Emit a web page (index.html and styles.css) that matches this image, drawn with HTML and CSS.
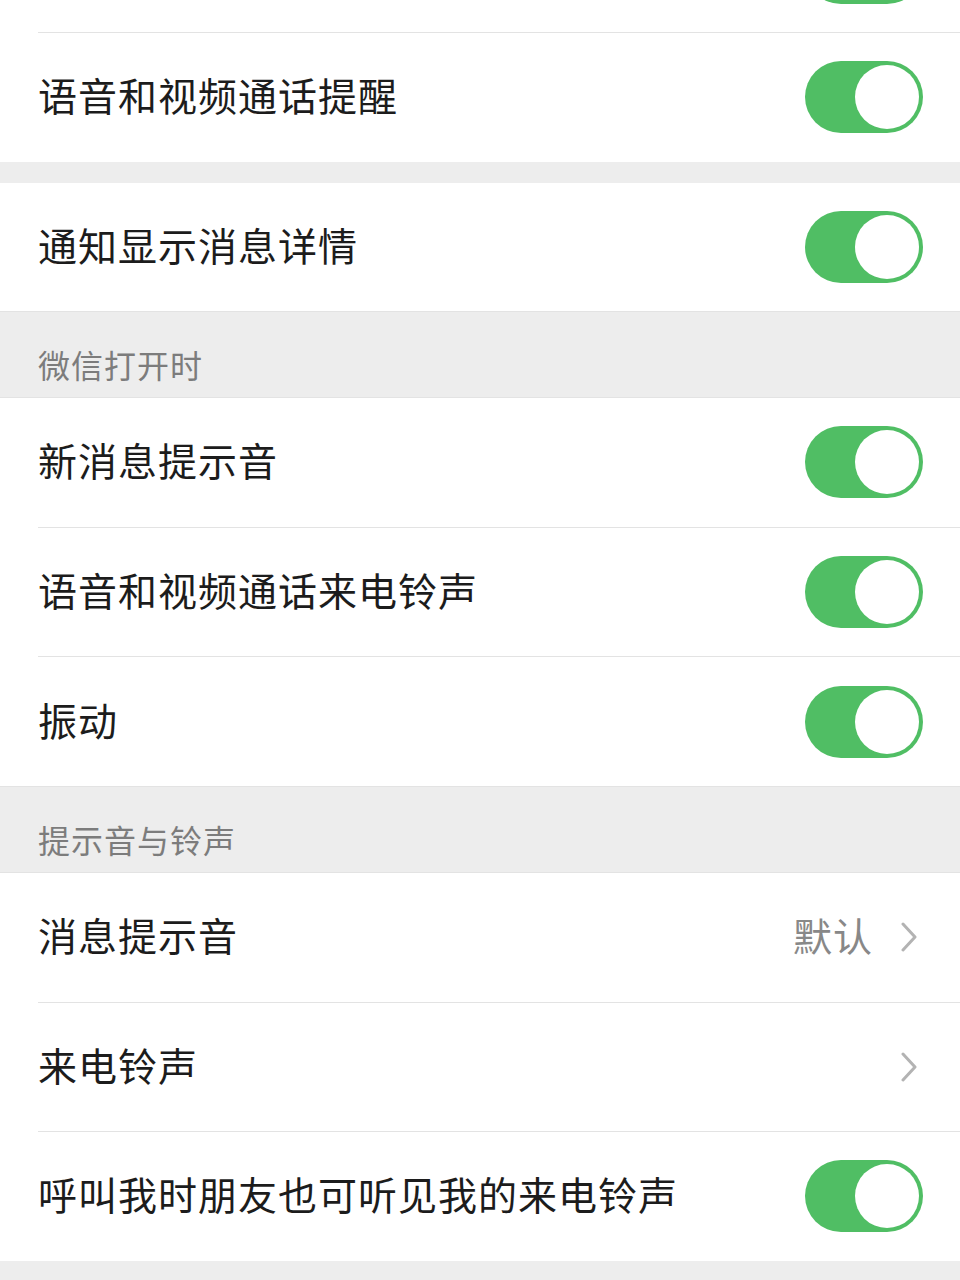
FILE: index.html
```html
<!DOCTYPE html>
<html lang="zh-CN">
<head>
<meta charset="utf-8">
<link rel="stylesheet" href="styles.css">
</head>
<body>
<div class="page">
  <div class="group group-top">
    <div class="row"><span class="label"></span><span class="switch"><span class="knob"></span></span></div>
    <div class="row"><span class="label">语音和视频通话提醒</span><span class="switch"><span class="knob"></span></span></div>
  </div>
  <div class="gap"></div>
  <div class="group">
    <div class="row"><span class="label">通知显示消息详情</span><span class="switch"><span class="knob"></span></span></div>
  </div>
  <div class="header">微信打开时</div>
  <div class="group">
    <div class="row"><span class="label">新消息提示音</span><span class="switch"><span class="knob"></span></span></div>
    <div class="row"><span class="label">语音和视频通话来电铃声</span><span class="switch"><span class="knob"></span></span></div>
    <div class="row"><span class="label">振动</span><span class="switch"><span class="knob"></span></span></div>
  </div>
  <div class="header">提示音与铃声</div>
  <div class="group">
    <div class="row link"><span class="label">消息提示音</span><span class="value">默认</span><svg class="chev" viewBox="0 0 16 30" width="16" height="30"><polyline points="2,2 14,15 2,28" fill="none" stroke="#b3b3b3" stroke-width="3" stroke-linecap="round" stroke-linejoin="round"/></svg></div>
    <div class="row link"><span class="label">来电铃声</span><svg class="chev" viewBox="0 0 16 30" width="16" height="30"><polyline points="2,2 14,15 2,28" fill="none" stroke="#b3b3b3" stroke-width="3" stroke-linecap="round" stroke-linejoin="round"/></svg></div>
    <div class="row"><span class="label">呼叫我时朋友也可听见我的来电铃声</span><span class="switch"><span class="knob"></span></span></div>
  </div>
</div>
</body>
</html>
```
FILE: styles.css
```css
html, body {
  margin: 0;
  padding: 0;
  background: #ededed;
}
body {
  font-family: "Noto Sans CJK SC", "Noto Sans", sans-serif;
  width: 960px;
  height: 1280px;
  overflow: hidden;
}
.page {
  display: flex;
  flex-direction: column;
}
.group {
  background: #ffffff;
  display: flex;
  flex-direction: column;
  padding-left: 38px;
}
.group-top {
  margin-top: -96.6px;
}
.row {
  height: 128.6px;
  display: flex;
  align-items: center;
  padding-right: 37px;
  border-top: 1px solid #e3e3e3;
  box-sizing: content-box;
}
.row:first-child {
  border-top: none;
}
.label {
  flex: 1;
  font-size: 39px;
  line-height: 50px;
  padding-bottom: 6px;
  color: #1c1c1c;
  letter-spacing: 1px;
}
.switch {
  width: 118px;
  height: 72px;
  border-radius: 36px;
  background: #50be64;
  display: flex;
  align-items: center;
  justify-content: flex-end;
  padding-right: 4px;
  box-sizing: border-box;
}
.knob {
  width: 64px;
  height: 64px;
  border-radius: 50%;
  background: #ffffff;
}
.link {
  padding-right: 43px;
}
.value {
  font-size: 39px;
  line-height: 50px;
  padding-bottom: 6px;
  color: #888888;
  margin-right: 28px;
  letter-spacing: 1px;
}
.chev {
  display: block;
}
.gap {
  height: 21px;
}
.header {
  height: 87px;
  box-sizing: border-box;
  padding: 34px 38px 0;
  font-size: 32px;
  line-height: 36px;
  color: #7c7c7c;
  letter-spacing: 1px;
  border-top: 1px solid #e3e3e3;
  border-bottom: 1px solid #e3e3e3;
}
```
